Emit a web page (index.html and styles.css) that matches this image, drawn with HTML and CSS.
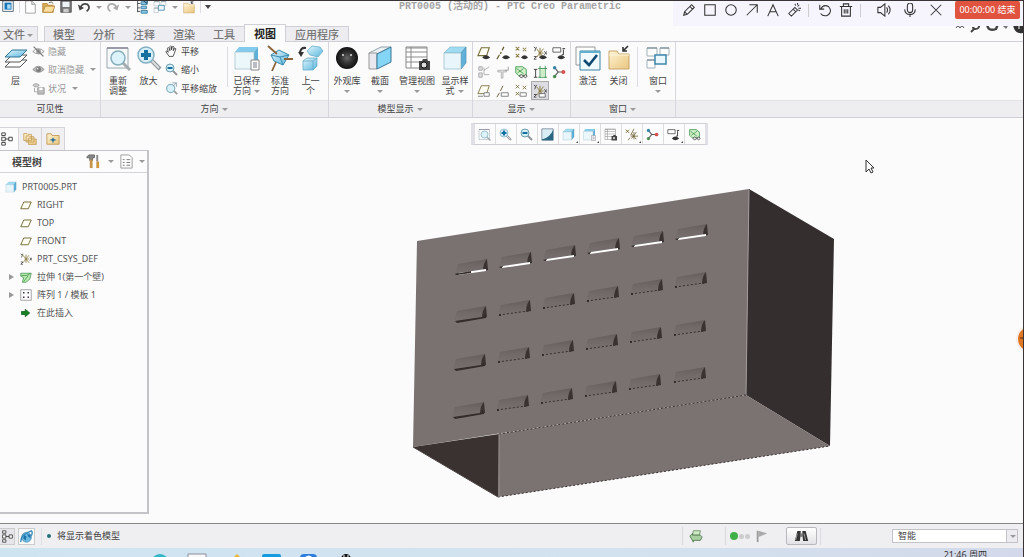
FILE: index.html
```html
<!DOCTYPE html>
<html lang="zh-CN">
<head>
<meta charset="utf-8">
<title>PRT0005 - PTC Creo Parametric</title>
<link rel="stylesheet" href="styles.css">
</head>
<body>
<svg class="defs" aria-hidden="true">
  <defs>
    <linearGradient id="blue" x1="0" y1="0" x2="1" y2="1"><stop offset="0" stop-color="#e4f6fd"/><stop offset="1" stop-color="#58b6dd"/></linearGradient>
    <linearGradient id="gold" x1="0" y1="0" x2="1" y2="1"><stop offset="0" stop-color="#fff3d2"/><stop offset="1" stop-color="#e9c67f"/></linearGradient>
    <linearGradient id="recess" x1="0" y1="0" x2="0" y2="1"><stop offset="0" stop-color="#645d5b"/><stop offset=".45" stop-color="#706967"/><stop offset="1" stop-color="#777070"/></linearGradient>
    <radialGradient id="ball"><stop offset="0" stop-color="#666"/><stop offset=".5" stop-color="#333"/><stop offset="1" stop-color="#111"/></radialGradient>
  </defs>
  <symbol id="app" viewBox="0 0 16 16"><path d="M2 1h12v12H2z" fill="#fff" stroke="#445b70"/><path d="M4 3h8v8H4z" fill="#1674b5"/><path d="M7 5h4v5H7z" fill="#a9dcf5"/></symbol>
  <symbol id="new" viewBox="0 0 16 16"><path d="M3 1h7l4 4v10H3z" fill="#fff" stroke="#999"/><path d="M10 1v4h4" fill="#ddd" stroke="#999"/></symbol>
  <symbol id="open" viewBox="0 0 16 16"><path d="M2 4h5l1 2h6v8H2z" fill="#d8ab56" stroke="#b88a3e"/><path d="M2 14l3-7h11l-3 7z" fill="#f8dfa0" stroke="#b88a3e"/><path d="M9 3q3-2 5 1" fill="none" stroke="#555"/></symbol>
  <symbol id="save" viewBox="0 0 16 16"><path d="M2 1h12v13H2z" fill="#777" stroke="#555"/><path d="M4 2h8v6H4z" fill="#eef3f5"/><path d="M5 10h6v4H5z" fill="#ccc"/></symbol>
  <symbol id="undo" viewBox="0 0 16 16"><path d="M4 9q2-6 8-4q4 4-1 8" fill="none" stroke="currentColor" stroke-width="2"/><path d="M1 5l2 7 5-3z" fill="currentColor"/></symbol>
  <symbol id="redo" viewBox="0 0 16 16"><path d="M12 9q-2-6-8-4q-4 4 1 8" fill="none" stroke="currentColor" stroke-width="2"/><path d="M15 5l-2 7-5-3z" fill="currentColor"/></symbol>
  <symbol id="regen" viewBox="0 0 16 16"><path d="M3 1v13M3 4h3M3 9h3M3 13h3" stroke="#444" fill="none"/><path d="M7 2h7v3H7zM7 7h6v3H7zM7 12h7v3H7z" fill="#8acbe5" stroke="#36789b"/><path d="M10 1l3 3 2-4" fill="none" stroke="#146"/></symbol>
  <symbol id="windows" viewBox="0 0 26 26"><path d="M2 3h10v8H2zM15 3h9v7h-9zM2 15h8v8H2z" fill="#fff" stroke="#a3b1b9"/><path d="M2 3h10M15 3h9M2 15h8" stroke="#8d9ca4" stroke-width="1.5"/><path d="M10 10h11v9H10z" fill="#eaf8fd" stroke="#3f86a9" stroke-width="1.5"/></symbol>
  <symbol id="closefolder" viewBox="0 0 26 26"><path d="M3 6h8l2 3h10v15H3z" fill="url(#gold)" stroke="#c8a56a"/><path d="M3 10h20" stroke="#fff5dc"/><path d="M22 1l-5 5M17 2v4h4" fill="none" stroke="#333" stroke-width="1.6"/></symbol>
  <symbol id="layers" viewBox="0 0 26 26"><path d="M2 22l7-7h15l-7 7z" fill="#fff" stroke="#555"/><path d="M2 17l7-7h15l-7 7z" fill="#fff" stroke="#555"/><path d="M2 12l7-7h15l-7 7z" fill="url(#blue)" stroke="#2e7596"/></symbol>
  <symbol id="hide" viewBox="0 0 16 16"><path d="M1 8q7-7 14 0q-7 6-14 0z" fill="none" stroke="#888"/><circle cx="8" cy="8" r="3" fill="#999"/><path d="M2 2l12 12" stroke="#777" stroke-width="1.5"/></symbol>
  <symbol id="eye" viewBox="0 0 16 16"><path d="M1 8q7-8 14 0q-7 7-14 0z" fill="#bbb" stroke="#888"/><circle cx="8" cy="8" r="3" fill="#777"/><circle cx="7" cy="7" r="1" fill="#fff"/></symbol>
  <symbol id="state" viewBox="0 0 16 16"><path d="M1 4q4-4 8 0q-4 4-8 0z" fill="#ccc" stroke="#999"/><path d="M3 7v5h3" fill="none" stroke="#999"/><path d="M7 7h8v8H7z" fill="#bbb" stroke="#999"/><path d="M9 7h4v3H9z" fill="#fff"/></symbol>
  <symbol id="refit" viewBox="0 0 26 26"><path d="M2 3h21v20H2z" fill="#f8fbfc" stroke="#9aa7ad"/><path d="M2 3h21" stroke="#889" stroke-width="1.5"/><path d="M18 18l7 7" stroke="#a4abae" stroke-width="3"/><circle cx="13" cy="13" r="7" fill="#dcf3fb" stroke="#87aebb" stroke-width="1.5"/></symbol>
  <symbol id="zoomin" viewBox="0 0 26 26"><path d="M15 15l9 9" stroke="#8f9599" stroke-width="4"/><path d="M15 15l8 8" stroke="#ddd" stroke-width="2"/><circle cx="10" cy="10" r="8" fill="#d4effa" stroke="#83afc0" stroke-width="1.5"/><path d="M10 5v10M5 10h10" stroke="#176f9f" stroke-width="4"/></symbol>
  <symbol id="zoomout" viewBox="0 0 26 26"><path d="M15 15l9 9" stroke="#8f9599" stroke-width="4"/><circle cx="10" cy="10" r="8" fill="#d4effa" stroke="#6d9dac" stroke-width="2"/><path d="M5 10h10" stroke="#176f9f" stroke-width="4"/></symbol>
  <symbol id="hand" viewBox="0 0 16 16"><path d="M5 14L1 8q1-2 3 1L3 4q1-2 2 0l1 3V2q1-2 2 0v4l1-4q2-1 2 1l-1 4 2-3q2 0 1 2l-3 8z" fill="#fff" stroke="#333"/></symbol>
  <symbol id="panzoom" viewBox="0 0 16 16"><path d="M10 10l5 5" stroke="#999" stroke-width="2"/><circle cx="7" cy="8" r="5" fill="#d8f1fa" stroke="#8bb2c0" stroke-width="1.5"/><path d="M9 1h5v5M14 1l-4 4" fill="none" stroke="#89a"/></symbol>
  <symbol id="cube" viewBox="0 0 26 26"><path d="M2 8l6-6h16l-5 6z" fill="#9fdcf3" stroke="#8bbccd" stroke-width=".7"/><path d="M19 8l5-6v16l-5 6z" fill="#62b1da" stroke="#4c91b0" stroke-width=".7"/><path d="M2 8h17v16H2z" fill="#e8f6fb" stroke="#91b9c8" stroke-width=".7"/></symbol>
  <symbol id="cubelist" viewBox="0 0 26 26"><path d="M1 7l4-5h19l-4 5z" fill="#82cbed"/><path d="M20 7l4-5v16l-4 4z" fill="#5eb0d6"/><path d="M1 7h19v17H1z" fill="#ecf7fb" stroke="#9ebdc8" stroke-width=".7"/><path d="M17 15h8v10h-8z" fill="#fff" stroke="#888"/><path d="M19 18h4M19 20h4M19 22h4" stroke="#778"/></symbol>
  <symbol id="orient" viewBox="0 0 26 26"><path d="M4 10l8-5 10 5-6 10-9-4z" fill="url(#blue)" stroke="#3c8cae"/><path d="M22 10l-9 2-9-2M13 12l3 8" stroke="#3c8cae" fill="none"/><path d="M1 1l9 8M17 14h9M9 17L5 26" stroke="#8d6439" stroke-width="1.8"/></symbol>
  <symbol id="previous" viewBox="0 0 26 26"><path d="M9 6l5-5 8 1 3 4-5 6-8-2z" fill="url(#blue)" stroke="#5ba7c5" stroke-width=".7"/><path d="M5 16l4-3h10v8l-4 4H5z" fill="url(#blue)" stroke="#5ba7c5" stroke-width=".7"/><path d="M5 16h10l4-3M15 16v9" fill="none" stroke="#5ba7c5" stroke-width=".7"/><path d="M8 3q-6-1-6 6" fill="none" stroke="#333" stroke-width="2"/><path d="M0 7l3 5 3-5z" fill="#333"/></symbol>
  <symbol id="sphere" viewBox="0 0 26 26"><circle cx="13" cy="13" r="11" fill="url(#ball)"/><circle cx="9" cy="10" r="1" fill="#ddd"/><circle cx="17" cy="10" r="1" fill="#ddd"/></symbol>
  <symbol id="section" viewBox="0 0 26 26"><path d="M2 8l12-6h10L10 9H2z" fill="#eef1f3" stroke="#92a1a8"/><path d="M2 8h8v16H2z" fill="#e8e8ee" stroke="#999"/><path d="M10 9l14-7v15l-14 7z" fill="#85d6f6" stroke="#397794"/></symbol>
  <symbol id="viewmgr" viewBox="0 0 26 26"><path d="M2 2h21v21H2z" fill="#fff" stroke="#888"/><path d="M2 3h21M2 7h21M2 12h21M2 17h21M7 2v21" stroke="#8b8b8b"/><path d="M15 16h3l1-2h4l1 2h2v9H15z" fill="#444"/><circle cx="20" cy="20" r="3" fill="#ddd" stroke="#111"/></symbol>
  <symbol id="activate" viewBox="0 0 26 26"><path d="M1 2h19v18H1z" fill="#fff" stroke="#999"/><path d="M5 6h20v19H5z" fill="#f1fafe" stroke="#3c83a1"/><path d="M5 7h20" stroke="#5fb0d0" stroke-width="2"/><path d="M9 15l5 5 8-10" fill="none" stroke="#104a72" stroke-width="2.6"/></symbol>
  <symbol id="plane" viewBox="0 0 16 16"><path d="M1 13L5 4h10l-4 9z" fill="#fffef5" stroke="#786f3a" stroke-width="1.3"/></symbol>
  <symbol id="planeeye" viewBox="0 0 16 16"><path d="M1 11L5 2h9l-3 9z" fill="#fffef5" stroke="#786f3a" stroke-width="1.3"/><path d="M6 13q4-5 9 0q-5 4-9 0z" fill="#333"/></symbol>
  <symbol id="axiseye" viewBox="0 0 16 16"><path d="M1 15l3-5M5 9l1-2M7 5l2-4" stroke="#61552e" stroke-width="1.3"/><path d="M7 13q4-5 9 0q-5 4-9 0z" fill="#333"/></symbol>
  <symbol id="pointeye" viewBox="0 0 16 16"><path d="M2 1l4 4M6 1L2 5M10 2l4 4M14 2l-4 4M2 9l4 4M6 9l-4 4" stroke="#8d8249" stroke-width="1.2"/><path d="M8 13q4-5 8 0q-4 4-8 0z" fill="#333"/></symbol>
  <symbol id="csys" viewBox="0 0 16 16"><path d="M8 2v11M4 13l8-10M4 3l8 10M6 8h6" stroke="#8d7c42" stroke-width="1.1"/><path d="M1 1l2 2 1-2M3 3l-1 3M1 12h3l-3 3h3M13 6l3 4M16 6l-3 4" stroke="#444" fill="none"/></symbol>
  <symbol id="csyseye" viewBox="0 0 16 16"><use href="#csys"/><path d="M7 13q4-5 9 0q-5 4-9 0z" fill="#333"/></symbol>
  <symbol id="csystag" viewBox="0 0 16 16"><use href="#csys"/><path d="M7 11h7v4H7z" fill="#fff" stroke="#666"/></symbol>
  <symbol id="datums" viewBox="0 0 16 16"><path d="M1 2l4 4M5 2L1 6" stroke="#786f3a" stroke-width="1.2"/><path d="M4 15l2-3M7 9L11 1M8 13l6-8M8 7l6 7M7 10h9M11 5v9" stroke="#6e6334"/></symbol>
  <symbol id="note" viewBox="0 0 16 16"><path d="M1 2h9v5H1z" fill="#fff" stroke="#555"/><path d="M12 3h3M13 4v6M13 10h-2" stroke="#222"/><path d="M6 13q4-5 9 0q-5 4-9 0z" fill="#333"/></symbol>
  <symbol id="greytree" viewBox="0 0 16 16"><path d="M2 2h4v4H2zM2 9h4v5H2z" fill="#ddd" stroke="#aaa"/><path d="M8 3v8h6M8 6l6-4" stroke="#aaa" fill="none"/></symbol>
  <symbol id="greyaxis" viewBox="0 0 16 16"><path d="M2 6h10v2H8v7H6V8H2z" fill="#ddd" stroke="#aaa" stroke-width=".8"/><path d="M14 2v4h-4" fill="none" stroke="#999"/></symbol>
  <symbol id="greenmesh" viewBox="0 0 16 16"><path d="M2 2h8l4 3v7H5L2 9z" fill="#d4f2ca" stroke="#419650"/><path d="M3 4l8 6M4 9l7-5" stroke="#419650"/><path d="M6 13q2-4 5 0q2-4 4 0q-2 3-4 0q-3 3-5 0z" fill="#eee" stroke="#444"/></symbol>
  <symbol id="dimension" viewBox="0 0 16 16"><path d="M3 5v9M1 5h4M1 14h4" stroke="#333"/><path d="M6 4h10M6 14h10M8 1v14M14 1v14" stroke="#38914b"/><path d="M9 5h4v8H9z" fill="#cceec5"/></symbol>
  <symbol id="spin" viewBox="0 0 16 16"><path d="M3 3l4 5-4 5M7 8h6" stroke="#555" fill="none" stroke-width="1.3"/><circle cx="3" cy="3" r="2" fill="#3485a8"/><circle cx="3" cy="13" r="2" fill="#498d50"/><circle cx="13" cy="8" r="2.3" fill="#d5534d"/></symbol>
  <symbol id="planetag" viewBox="0 0 16 16"><path d="M1 11L5 2h9l-3 9z" fill="#fffef5" stroke="#786f3a"/><path d="M1 14h6M8 10h6v4H8z" fill="#fff" stroke="#777"/></symbol>
  <symbol id="axistag" viewBox="0 0 16 16"><path d="M1 15l3-5M5 8l3-6" stroke="#61552e"/><path d="M6 10h8v4H6z" fill="#fff" stroke="#777"/></symbol>
  <symbol id="pointtag" viewBox="0 0 16 16"><path d="M2 1l4 4M6 1L2 5M10 2l4 4M14 2l-4 4M2 9l4 4M6 9l-4 4" stroke="#786f3a"/><path d="M7 10h7v4H7z" fill="#fff" stroke="#777"/></symbol>
  <symbol id="shade" viewBox="0 0 16 16"><path d="M1 1h14v14H1z" fill="#d9edf4" stroke="#789"/><path d="M15 2v13H1v-1q10-2 14-12z" fill="#296783"/></symbol>
  <symbol id="treeicon" viewBox="0 0 16 16"><path d="M2 1h4v3H2zM2 6h4v4H2zM2 12h4v3H2zM10 6h4v4h-4zM6 8h4" fill="#fff" stroke="#333"/></symbol>
  <symbol id="folders" viewBox="0 0 18 18"><path d="M1 2h4l1 1h5v8H1zM4 5h4l1 1h5v7H4zM7 8h4l1 1h5v7H7z" fill="url(#gold)" stroke="#c19a58"/></symbol>
  <symbol id="favorite" viewBox="0 0 16 16"><path d="M1 2h5l1 2h8v10H1z" fill="url(#gold)" stroke="#c19a58"/><path d="M8 6l1 2 3 1-3 1-1 3-1-3-3-1 3-1z" fill="#246e99"/></symbol>
  <symbol id="tools" viewBox="0 0 16 16"><path d="M1 3l2-2h6v3H7v3H4V4H1z" fill="#888" stroke="#666"/><path d="M4 6h3v9H4z" fill="#c59449"/><path d="M12 1v7" stroke="#888" stroke-width="2"/><path d="M11 8h3v7h-3z" fill="#ce963d"/></symbol>
  <symbol id="list" viewBox="0 0 16 16"><path d="M2 1h9l3 3v11H2z" fill="#fff" stroke="#999"/><path d="M4 6h2M4 9h2M4 12h2M8 6h4M8 9h4M8 12h4" stroke="#777"/></symbol>
  <symbol id="extrude" viewBox="0 0 16 16"><path d="M1 3h14l-2 8-5 4H3l2-6-4-2z" fill="#b9e8af" stroke="#40924b"/><path d="M2 6h7l5-3M5 14l6-8" stroke="#40924b" fill="none"/></symbol>
  <symbol id="pattern" viewBox="0 0 16 16"><path d="M1 1h14v14H1z" fill="#fff" stroke="#888"/><path d="M4 4h2v2H4zM10 4h2v2h-2zM4 10h2v2H4zM10 10h2v2h-2z" fill="#435"/></symbol>
  <symbol id="arrow" viewBox="0 0 16 16"><path d="M2 6h5V3l6 5-6 5v-3H2z" fill="#168123" stroke="#0c5a18"/></symbol>
  <symbol id="globe" viewBox="0 0 16 16"><circle cx="8" cy="9" r="6" fill="#69b9e1" stroke="#5a93b3"/><path d="M5 6l3 2-1 5-3-3zM9 5l4 1v4l-3-2z" fill="#1d72a8"/><path d="M1 15Q0 6 14 1q2 2 0 6" stroke="#3488b8" stroke-width="1.6" fill="none"/></symbol>
  <symbol id="layerback" viewBox="0 0 16 16"><path d="M5 2h8l-1 5H4z" fill="#cdecc4" stroke="#6d8f68"/><path d="M1 8l3-3v2h9l2 2-2 4H5v2z" fill="#a9cfa1" stroke="#557c50"/></symbol>
  <symbol id="flag" viewBox="0 0 16 16"><path d="M3 2v13" stroke="#999" stroke-width="2"/><path d="M4 2l10 3-10 4z" fill="#aaa"/></symbol>
  <symbol id="binocular" viewBox="0 0 18 16"><path d="M4 2h4v4l-1 8H1zM10 2h4l3 12h-6l-1-8z" fill="#333"/><path d="M7 5h4v4H7z" fill="#777"/><path d="M4 5L2 13M12 5l2 8" stroke="#aaa"/></symbol>
  <symbol id="pen" viewBox="0 0 16 16"><path d="M2 14l1-4 8-8 3 3-8 8zM3 10l3 3M9 4l3 3"/></symbol>
  <symbol id="square" viewBox="0 0 16 16"><path d="M2 2h12v12H2z"/></symbol>
  <symbol id="circle" viewBox="0 0 16 16"><circle cx="8" cy="8" r="6"/></symbol>
  <symbol id="diag" viewBox="0 0 16 16"><path d="M2 14L14 2M5 2h9v9"/></symbol>
  <symbol id="letter" viewBox="0 0 16 16"><path d="M2 15L8 2l6 13M4 10h8"/></symbol>
  <symbol id="wand" viewBox="0 0 16 16"><path d="M2 12l7-7 3 3-7 7zM7 7l3 3M9 1l1 2M14 2l-2 2M13 8l2 1M13 6h3M12 0v2"/></symbol>
  <symbol id="revert" viewBox="0 0 16 16"><path d="M2 2v5h5M3 7q3-6 9-3q5 6-1 10-5 2-8-2"/></symbol>
  <symbol id="trash" viewBox="0 0 16 16"><path d="M1 4h14M5 4V1h6v3M3 4v11h10V4M6 7v5M8 7v5M10 7v5"/></symbol>
  <symbol id="speaker" viewBox="0 0 16 16"><path d="M1 5h3l5-4v14l-5-4H1zM11 5q2 3 0 6M13 3q4 5 0 10"/></symbol>
  <symbol id="mic" viewBox="0 0 16 16"><rect x="5" y="0" width="6" height="11" rx="3"/><path d="M2 7q0 6 6 6t6-6M8 13v3"/></symbol>
  <symbol id="cross" viewBox="0 0 16 16"><path d="M2 2l12 12M14 2L2 14"/></symbol>
  <symbol id="slot" overflow="visible"><path d="M-29 5L0 0L-3 12L-32 15z" fill="url(#recess)"/><path d="M0 0q-4 4-4 12l5-1z" fill="#393231"/></symbol>
  <symbol id="slotopen" overflow="visible"><use href="#slot"/><path d="M-32 15l5-1-3 2z" fill="#29201e"/><path d="M-28 14L-1 10v2L-29 16z" fill="#fff"/></symbol>
  <symbol id="slotdark" overflow="visible"><use href="#slot"/><path d="M-31 15L-4 11L0 9v3L-29 17z" fill="#332c2b"/></symbol>
  <symbol id="slotline" overflow="visible"><use href="#slot"/><path d="M-31 15L-2 11" stroke="#39302e" stroke-dasharray="2 2"/><circle cx="-30" cy="15" r="1" fill="#29201e"/></symbol>
</svg>

<div class="app">
  <header class="titlebar">
    <div class="quick">
      <button aria-label="应用"><svg><use href="#app"/></svg></button><i class="rule"></i>
      <button aria-label="新建"><svg><use href="#new"/></svg></button>
      <button aria-label="打开"><svg><use href="#open"/></svg></button>
      <button aria-label="保存"><svg><use href="#save"/></svg></button>
      <button aria-label="撤消"><svg><use href="#undo"/></svg></button><i class="caret"></i>
      <button class="muted" aria-label="重做"><svg><use href="#redo"/></svg></button><i class="caret"></i>
      <button aria-label="重新生成"><svg><use href="#regen"/></svg></button>
      <button aria-label="窗口"><svg><use href="#windows"/></svg></button><i class="caret"></i>
      <button aria-label="关闭"><svg><use href="#closefolder"/></svg></button><i class="rule"></i><i class="caret dark"></i>
    </div>
    <h1 class="title">PRT0005 (活动的) - PTC Creo Parametric</h1>
  </header>
  <div class="recorder">
    <button aria-label="画笔"><svg><use href="#pen"/></svg></button>
    <button aria-label="矩形"><svg><use href="#square"/></svg></button>
    <button aria-label="圆"><svg><use href="#circle"/></svg></button>
    <button aria-label="箭头"><svg><use href="#diag"/></svg></button>
    <button aria-label="文字"><svg><use href="#letter"/></svg></button>
    <button aria-label="魔棒"><svg><use href="#wand"/></svg></button><i class="rule"></i>
    <button aria-label="还原"><svg><use href="#revert"/></svg></button>
    <button aria-label="删除"><svg><use href="#trash"/></svg></button><i class="rule far"></i>
    <button class="wide" aria-label="声音"><svg><use href="#speaker"/></svg></button>
    <button class="wide" aria-label="麦克风"><svg><use href="#mic"/></svg></button>
    <button class="wide" aria-label="关闭录制"><svg><use href="#cross"/></svg></button>
    <button class="stop">00:00:00 结束</button>
  </div>

  <nav class="tabs">
    <button class="tab file">文件<i class="caret"></i></button>
    <button class="tab">模型</button><button class="tab">分析</button><button class="tab">注释</button><button class="tab">渲染</button><button class="tab">工具</button><button class="tab active">视图</button><button class="tab">应用程序</button>
    <svg class="help" viewBox="0 0 68 10" aria-hidden="true"><g fill="none" stroke="#444"><path d="M1 4q2-4 4 0q2-4 4 0"/><path d="M24 0q1 5-4 5q-2 0-2-2M20 4l-4 4" stroke-width="2"/><path d="M32 0q1 8 9 5l2-5" stroke-width="2.4"/><path d="M34 1h7" stroke-width="2"/></g><path d="M48 2h5l-2 3z" fill="#777"/><path d="M58 1h10v8q-8 2-10-8z" fill="#333"/><path d="M64 1v4" stroke="#fff"/></svg>
  </nav>

  <section class="ribbon">
    <div class="group g1"><div class="body">
      <button class="big w28"><svg><use href="#layers"/></svg><span>层</span></button>
      <div class="stack faded"><button><svg><use href="#hide"/></svg>隐藏</button><button><svg><use href="#eye"/></svg>取消隐藏 <i class="caret"></i></button><button><svg><use href="#state"/></svg>状况 <i class="caret"></i></button></div>
    </div><footer>可见性</footer></div>
    <div class="group g2"><div class="body">
      <button class="big w32"><svg><use href="#refit"/></svg><span>重新<br>调整</span></button>
      <button class="big w28"><svg><use href="#zoomin"/></svg><span>放大</span></button>
      <div class="stack"><button><svg><use href="#hand"/></svg>平移</button><button><svg><use href="#zoomout"/></svg>缩小</button><button><svg><use href="#panzoom"/></svg>平移缩放</button></div>
      <i class="rule"></i>
      <button class="big w34"><svg><use href="#cubelist"/></svg><span>已保存<br>方向 <i class="caret"></i></span></button>
      <button class="big w32"><svg><use href="#orient"/></svg><span>标准<br>方向</span></button>
      <button class="big w28"><svg><use href="#previous"/></svg><span>上一<br>个</span></button>
    </div><footer>方向 <i class="caret"></i></footer></div>
    <div class="group g3"><div class="body">
      <button class="big w34"><svg><use href="#sphere"/></svg><span>外观库<br><i class="caret"></i></span></button>
      <button class="big w32"><svg><use href="#section"/></svg><span>截面<br><i class="caret"></i></span></button>
      <button class="big w40"><svg><use href="#viewmgr"/></svg><span>管理视图<br><i class="caret"></i></span></button>
      <button class="big w34"><svg><use href="#cube"/></svg><span>显示样<br>式 <i class="caret"></i></span></button>
    </div><footer>模型显示 <i class="caret"></i></footer></div>
    <div class="group g4"><div class="body toggles">
      <button aria-label="平面显示"><svg><use href="#planeeye"/></svg></button><button aria-label="轴显示"><svg><use href="#axiseye"/></svg></button><button aria-label="点显示"><svg><use href="#pointeye"/></svg></button><button aria-label="坐标系显示"><svg><use href="#csyseye"/></svg></button><button aria-label="注释显示"><svg><use href="#note"/></svg></button>
      <button aria-label="层次"><svg><use href="#greytree"/></svg></button><button aria-label="轴线"><svg><use href="#greyaxis"/></svg></button><button aria-label="网格"><svg><use href="#greenmesh"/></svg></button><button aria-label="尺寸"><svg><use href="#dimension"/></svg></button><button aria-label="旋转中心"><svg><use href="#spin"/></svg></button>
      <button aria-label="平面标记"><svg><use href="#planetag"/></svg></button><button aria-label="轴标记"><svg><use href="#axistag"/></svg></button><button aria-label="点标记"><svg><use href="#pointtag"/></svg></button><button class="pressed" aria-label="坐标系标记"><svg><use href="#csystag"/></svg></button>
    </div><footer>显示 <i class="caret"></i></footer></div>
    <div class="group g5"><div class="body">
      <button class="big w32"><svg><use href="#activate"/></svg><span>激活</span></button>
      <button class="big w28"><svg><use href="#closefolder"/></svg><span>关闭</span></button>
      <i class="rule"></i>
      <button class="big w34"><svg><use href="#windows"/></svg><span>窗口<br><i class="caret"></i></span></button>
    </div><footer>窗口 <i class="caret"></i></footer></div>
    <div class="group rest"><div class="body"></div><footer></footer></div>
  </section>

  <main class="work">
    <aside class="panel">
      <div class="ptabs"><button class="on" aria-label="模型树"><svg><use href="#treeicon"/></svg></button><button aria-label="文件夹"><svg><use href="#folders"/></svg></button><button aria-label="收藏夹"><svg><use href="#favorite"/></svg></button></div>
      <div class="pbox">
        <div class="phead"><h2>模型树</h2><button aria-label="设置"><svg><use href="#tools"/></svg></button><i class="caret"></i><button aria-label="显示"><svg><use href="#list"/></svg></button><i class="caret"></i></div>
        <ul class="tree">
          <li class="root"><svg><use href="#cube"/></svg>PRT0005.PRT</li>
          <li><b></b><svg><use href="#plane"/></svg>RIGHT</li>
          <li><b></b><svg><use href="#plane"/></svg>TOP</li>
          <li><b></b><svg><use href="#plane"/></svg>FRONT</li>
          <li><b></b><svg><use href="#csys"/></svg>PRT_CSYS_DEF</li>
          <li><b class="expand"></b><svg><use href="#extrude"/></svg>拉伸 1(第一个壁)</li>
          <li><b class="expand"></b><svg><use href="#pattern"/></svg>阵列 1 / 模板 1</li>
          <li><b></b><svg><use href="#arrow"/></svg>在此插入</li>
        </ul>
      </div>
    </aside>
    <section class="canvas">
      <svg class="model" viewBox="149 118 874 405" role="img" aria-label="模型">
        <path d="M417 241L749 189L746 395L413 447z" fill="#7a7270"/>
        <path d="M749 189L834 239L830 446L746 395z" fill="#352e2f"/>
        <path d="M498 434L746 395L830 446L498 497z" fill="#7b7371"/>
        <path d="M413 447L499 434L498 497z" fill="#393231"/>
        <path d="M749 190L746 395" stroke="#a09b9b"/>
        <path d="M499 434L746 395M498 497L830 446" stroke="#3b3332" stroke-dasharray="2 2"/>
        <path d="M413 447l85 50" stroke="#4c4543" fill="none"/>
        <path d="M499 434v63" stroke="#969090"/>
        <g><use href="#slotopen" x="487" y="259"/><use href="#slotopen" x="531" y="252"/><use href="#slotopen" x="575" y="245"/><use href="#slotopen" x="619" y="238"/><use href="#slotopen" x="663" y="231"/><use href="#slotopen" x="707" y="224"/></g>
        <path d="M455 274l16-3v2l-14 2z" fill="#332c2b"/>
        <g><use href="#slotdark" x="486" y="306"/><use href="#slotline" x="530" y="300"/><use href="#slotline" x="574" y="293"/><use href="#slotline" x="618" y="286"/><use href="#slotline" x="662" y="279"/><use href="#slotline" x="706" y="272"/></g>
        <g><use href="#slotdark" x="485" y="354"/><use href="#slotline" x="529" y="347"/><use href="#slotline" x="573" y="340"/><use href="#slotline" x="617" y="334"/><use href="#slotline" x="661" y="327"/><use href="#slotline" x="705" y="320"/></g>
        <g><use href="#slotdark" x="484" y="402"/><use href="#slotline" x="528" y="395"/><use href="#slotline" x="572" y="388"/><use href="#slotline" x="616" y="381"/><use href="#slotline" x="660" y="374"/><use href="#slotline" x="705" y="367"/></g>
        <path d="M866 160v12l3-3 2 4 2-1-2-4h3z" fill="#fff" stroke="#333"/>
        <circle cx="1030" cy="339" r="13" fill="#df7725" stroke="#f6eee9" stroke-width="2"/><path d="M1020 338h4" stroke="#5b2505"/>
      </svg>
      <div class="viewbar">
        <button aria-label="重新调整"><svg><use href="#refit"/></svg></button><button aria-label="放大"><svg><use href="#zoomin"/></svg></button><button aria-label="缩小"><svg><use href="#zoomout"/></svg></button><button aria-label="重画"><svg><use href="#shade"/></svg></button><button class="more" aria-label="显示样式"><svg><use href="#cube"/></svg></button><button class="more" aria-label="已保存方向"><svg><use href="#cubelist"/></svg></button><button aria-label="视图管理器"><svg><use href="#viewmgr"/></svg></button><button class="more" aria-label="基准显示"><svg><use href="#datums"/></svg></button><button aria-label="旋转中心"><svg><use href="#spin"/></svg></button><button class="more" aria-label="注释"><svg><use href="#note"/></svg></button><button aria-label="网格"><svg><use href="#greenmesh"/></svg></button>
      </div>
    </section>
  </main>

  <footer class="status">
    <button class="sbtn down" aria-label="模型树"><svg><use href="#treeicon"/></svg></button>
    <button class="sbtn" aria-label="浏览器"><svg><use href="#globe"/></svg></button>
    <i class="rule"></i><p>将显示着色模型</p>
    <div class="tray">
      <div class="cell c1"><svg><use href="#layerback"/></svg></div>
      <div class="cell c2"><span class="lamps"><i></i><i></i><i></i></span></div>
      <div class="cell c3"><svg><use href="#flag"/></svg></div>
      <button class="find" aria-label="查找"><svg><use href="#binocular"/></svg></button><i class="rule"></i>
    </div>
    <div class="filter"><select aria-label="过滤器"><option>智能</option></select><i class="caret"></i></div>
  </footer>
  <div class="taskbar">
    <svg viewBox="0 0 210 9" aria-hidden="true"><circle cx="12" cy="15" r="9" fill="#31b6c5"/><path d="M40 6h18v5H40z" fill="#f7f8fa" stroke="#8a9099"/><path d="M86 9l3-3 3 3z" fill="#e9b634"/><rect x="114" y="6" width="19" height="9" rx="2" fill="#149ce0"/><rect x="152" y="6" width="17" height="9" rx="4" fill="#2b7de0"/><path d="M157 9q4-3 7 0" fill="#fff"/><circle cx="198" cy="11" r="5" fill="#111"/><path d="M196 7v2M200 7v2" stroke="#fff"/></svg>
    <time>21:46 周四</time>
  </div>
</div>
</body>
</html>
```
FILE: styles.css
```css
* { box-sizing: border-box; }
body { margin: 0; font: 9px/12px "Noto Sans", "Noto Sans CJK SC", sans-serif; color: #444; background: #fbfbfc; }
button { font: inherit; color: inherit; background: none; border: 0; padding: 0; margin: 0; }
h1, h2, p, ul { margin: 0; padding: 0; }
svg { display: block; flex: none; }
.defs { position: absolute; width: 0; height: 0; }
.app { position: relative; display: flex; flex-direction: column; height: 100vh; overflow: hidden; border-top: 1px solid #3b3436; border-right: 1px solid #3b3436; }
.caret { display: inline-block; flex: none; border: 3px solid transparent; border-top: 3px solid #999; border-bottom: 0; margin: 0 1px; vertical-align: middle; }
.caret.dark { border-top-color: #444; border-top-width: 4px; }
.rule { width: 1px; background: #dcdce2; flex: none; align-self: stretch; }

.titlebar { display: flex; flex: none; height: 23px; align-items: flex-start; }
.quick { display: flex; align-items: center; height: 12px; width: 399px; gap: 3px; padding-left: 1px; }
.quick svg { width: 14px; height: 14px; }
.quick button { margin-right: 1px; }
.muted { color: #aaa; }
.title { font: bold 10px/11px "Liberation Mono", "Noto Sans CJK SC", monospace; color: #a4a4a4; white-space: nowrap; }
.recorder { position: absolute; top: 0; right: 0; display: flex; height: 25px; padding: 0 3px 0 5px; background: #f6f5fd; z-index: 2; }
.recorder button { width: 21px; height: 17px; display: flex; align-items: center; justify-content: center; }
.recorder .wide { width: 26px; }
.recorder svg { width: 14px; height: 14px; fill: none; stroke: #333; stroke-width: 1.2; }
.recorder .rule { height: 13px; margin: 3px 5px 3px 4px; background: #ccc; }
.recorder .rule.far { margin-right: 10px; }
.recorder .stop { width: 65px; height: 18px; margin-left: 6px; background: #e0533f; color: #fff; border-radius: 2px; font-size: 9px; white-space: nowrap; }

.tabs { display: flex; flex: none; height: 17px; align-items: flex-end; }
.tab { height: 15px; padding: 0 9px; font: 500 11px/13px "Noto Sans CJK SC", sans-serif; color: #777; background: #ededf1; border: solid #d0d0d6; border-width: 1px 0 0; white-space: nowrap; }
.tab.file { padding: 0 4px 0 3px; margin-right: 6px; border-right-width: 1px; }
.tab.file .caret { margin: 0 0 0 2px; }
.tab.file + .tab { border-left-width: 1px; padding-left: 8px; }
.tab.active { height: 18px; margin-bottom: -1px; background: #fcfcfd; border-width: 1px 1px 0; color: #222; font-weight: 700; z-index: 1; position: relative; }
.tab:last-of-type { border-right-width: 1px; }
.help { width: 68px; height: 10px; margin-left: auto; align-self: flex-start; }

.ribbon { display: flex; flex: none; border-top: 1px solid #cfcfd6; border-bottom: 1px solid #cfcfd6; }
.group { display: flex; flex-direction: column; flex: none; border-right: 1px solid #d6d6dc; }
.g1 { width: 101px; } .g2 { width: 228px; } .g3 { width: 144px; } .g4 { width: 98px; } .g5 { width: 105px; }
.rest { flex: 1; border-right: 0; }
.body { display: flex; height: 58px; padding: 3px 1px 0; }
.g2 .body { padding-right: 3px; }
.group footer { height: 17px; line-height: 15px; text-align: center; background: #eeeef1; border-top: 1px solid #e2e2e7; font-family: "Noto Sans CJK SC", sans-serif; }
.big { display: flex; flex-direction: column; align-items: center; gap: 5px; line-height: 10px; white-space: nowrap; flex: none; height: 54px; text-align: center; font-family: "Noto Sans CJK SC", sans-serif; }
.big svg { width: 26px; height: 26px; }
.w28 { width: 29px; } .w32 { width: 32px; } .w34 { width: 34px; } .w40 { width: 42px; }
.body > .rule { height: 40px; margin: 2px 2px 0; align-self: flex-start; }
.g5 .body > .rule { margin: 2px 3px 0 4px; }
.stack { display: flex; flex-direction: column; padding: 0 2px; font-family: "Noto Sans CJK SC", sans-serif; flex: 1; }
.stack button { display: flex; align-items: center; gap: 3px; height: 19px; line-height: 13px; padding-bottom: 5px; white-space: nowrap; }
.stack svg { width: 13px; height: 13px; }
.stack .caret { margin-left: 3px; }
.faded { color: #999; }
.toggles { display: grid; grid-template-columns: repeat(5, 1fr); grid-template-rows: repeat(3, 19px); padding: 1px 2px 0; }
.toggles button { display: flex; align-items: center; justify-content: center; }
.toggles svg { width: 14px; height: 14px; }
.pressed { background: #dcdce2; border: 1px solid #aaa; }

.work { display: flex; flex: 1; min-height: 0; }
.panel { display: flex; flex-direction: column; width: 149px; flex: none; padding: 9px 0 9px; }
.ptabs { display: flex; height: 23px; }
.ptabs button { width: 23px; display: flex; align-items: center; justify-content: center; background: #f0f0f3; border: 1px solid #d4d4d9; border-left: 0; border-bottom: 0; }
.ptabs .on { width: 19px; background: #fcfcfd; justify-content: flex-start; }
.ptabs svg { width: 14px; height: 14px; }
.pbox { flex: 1; border: solid #c4c4c8; border-width: 1px 2px 2px 0; background: #fcfcfd; }
.phead { display: flex; align-items: center; height: 22px; padding: 0 1px 0 12px; border-bottom: 1px solid #d4d4d9; }
.phead h2 { flex: 1; font: 700 10px/12px "Noto Sans CJK SC", sans-serif; color: #444; }
.phead svg { width: 15px; height: 15px; }
.phead .caret { margin: 0 5px 0 7px; }
.phead .caret:last-child { margin-right: 1px; margin-left: 5px; }
.tree { list-style: none; padding-top: 4px; color: #555; }
.tree li { display: flex; align-items: center; height: 18px; padding-left: 8px; gap: 5px; white-space: nowrap; }
.tree li.root { padding-left: 5px; height: 19px; }
.tree svg { width: 12px; height: 12px; }
.tree b { width: 7px; height: 7px; }
.tree .expand { border: 3px solid transparent; border-left: 5px solid #999; border-right: 0; width: 5px; height: 6px; margin: 0 1px; }
.canvas { position: relative; flex: 1; min-width: 0; display: flex; justify-content: center; align-items: flex-start; padding: 5px 0 0 6px; overflow: hidden; }
.model { position: absolute; inset: 0; width: 100%; height: 100%; }
.viewbar { position: relative; display: flex; border: 1px solid #cfcfd5; border-left: 4px solid #e0e0e6; border-right: 3px solid #e0e0e6; background: #fcfcfd; }
.viewbar button { width: 21px; height: 20px; display: flex; align-items: center; justify-content: center; border-right: 1px solid #ddd; position: relative; }
.viewbar button:last-child { border-right: 0; width: 20px; }
.viewbar svg { width: 13px; height: 13px; }
.more::after { content: ""; position: absolute; right: 1px; bottom: 1px; border: 1px solid #444; border-top-color: transparent; border-left-color: transparent; }

.status { display: flex; flex: none; align-items: center; height: 25px; padding-right: 5px; background: #efeff2; border-top: 1px solid #888; }
.sbtn { display: flex; align-items: center; justify-content: center; width: 17px; height: 17px; margin-right: 3px; border: 1px solid #ccc; background: #fafafb; }
.sbtn.down { width: 15px; border-left: 0; background: #e6e6ea; }
.sbtn svg { width: 13px; height: 13px; }
.status .rule { height: 17px; align-self: center; margin: 0 5px 0 3px; }
.status p { flex: 1; display: flex; align-items: center; gap: 6px; font-family: "Noto Sans CJK SC", sans-serif; }
.status p::before { content: ""; width: 4px; height: 4px; border-radius: 2px; background: #267078; }
.tray { display: flex; align-items: center; margin-right: 68px; }
.cell { height: 18px; display: flex; align-items: center; border-left: 1px solid #d8d8dd; padding-left: 6px; }
.c1 { width: 43px; } .c2 { width: 27px; padding-left: 4px; } .c3 { width: 34px; padding-left: 3px; border-left: 0; }
.cell svg { width: 14px; height: 14px; }
.lamps { display: flex; align-items: center; gap: 1px; }
.lamps i { width: 5px; height: 5px; border-radius: 50%; background: #ccc; }
.lamps i:first-child { width: 8px; height: 8px; background: #41b04a; }
.find { display: flex; align-items: center; justify-content: center; width: 31px; height: 18px; border: 1px solid #b8b8bd; border-radius: 2px; background: linear-gradient(#fff, #e2e2e6); }
.find svg { width: 15px; height: 14px; }
.tray .rule { margin: 0 3px; }
.filter { position: relative; width: 126px; height: 14px; flex: none; }
.filter select { appearance: none; display: block; width: 100%; height: 14px; padding: 0 5px; border: 1px solid #c2c2c8; border-radius: 0; background: linear-gradient(to left, #ececf0 10px, #c2c2c8 10px, #c2c2c8 11px, #fff 11px); font: 9px/12px "Noto Sans CJK SC", sans-serif; color: #444; }
.filter .caret { position: absolute; right: 1px; top: 6px; }

.taskbar { display: flex; flex: none; justify-content: space-between; height: 9px; padding: 0 36px 0 148px; overflow: hidden; background: linear-gradient(to right, #cfe4f1, #d3e2ef 60%, #d3d9ea); }
.taskbar svg { width: 210px; height: 9px; }
.taskbar time { padding-top: 2px; line-height: 10px; color: #333; }
```
